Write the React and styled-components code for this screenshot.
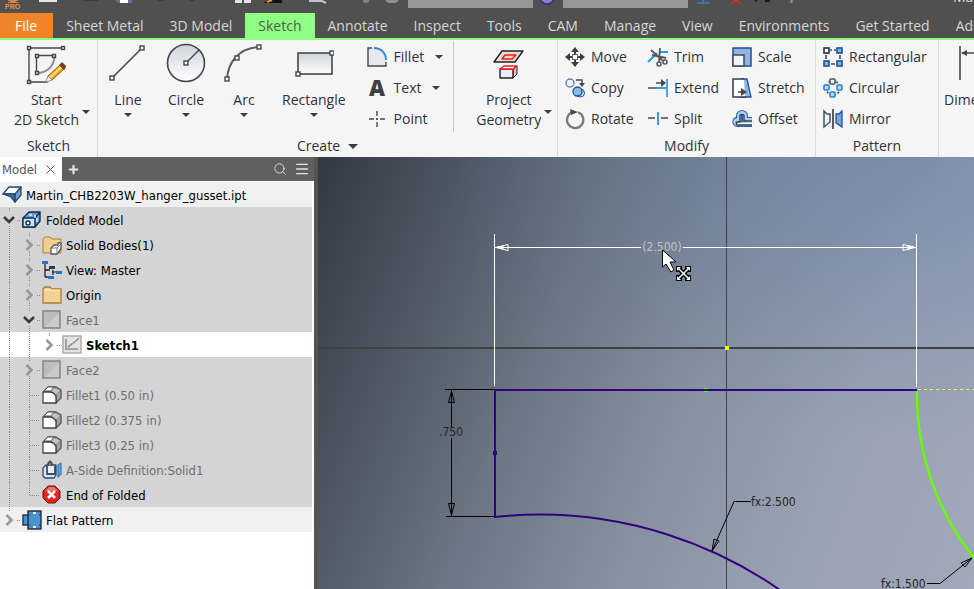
import React from "react";
import styled, { createGlobalStyle, css } from "styled-components";
import { Menu, Plus, Search, X } from "lucide-react";

const INK = "#45474c";
const BLUE = "#2d83cc";
const NAVY = "#1f4e9c";

/* ---------- big ribbon icons, 40 x 44 ---------- */

const Node = ({ x, y }) => (
  <rect x={x - 2} y={y - 2} width="4" height="4" fill="#fff" stroke={INK} strokeWidth="1.4" />
);

const StartIcon = () => (
  <svg width="40" height="44" fill="none" stroke={INK} strokeWidth="1.4">
    <path d="M3 6H37M3 6V40H22M10.500 13.500H28.500M10.500 13.500V31" />
    <path d="M28.500 13.500C28.500 24 21 31 10.500 31" stroke="#8b8d92" strokeWidth="2" />
    {[[3, 6], [37, 6], [3, 40], [11, 14], [28, 14], [11, 31]].map(([x, y]) => (
      <rect key={`${x}-${y}`} x={x - 1.5} y={y - 1.5} width="3" height="3" fill="#ddd" />
    ))}
    <path d="M20.500 39.500L22 34L34 23L38 27L26 38Z" fill="#f4a21d" stroke="#8a5a1c" strokeWidth="1" />
    <path d="M24 35.500L36 24.500" stroke="#ffdc7c" strokeWidth="2" />
    <path d="M34 23L36 21L39.500 24.500L38 27Z" fill="#7a3b1d" stroke="#7a3b1d" />
    <path d="M20 40L22 34L26 38Z" fill="#fff" stroke="#999" strokeWidth="1" />
  </svg>
);

const LineIcon = () => (
  <svg width="40" height="44">
    <path d="M4 36L34 6" stroke={INK} strokeWidth="1.6" />
    <Node x={4} y={36} />
    <Node x={34} y={6} />
  </svg>
);

const CircleIcon = () => (
  <svg width="40" height="44" stroke={INK}>
    <defs>
      <linearGradient id="disc" x2="0" y2="1">
        <stop offset="0" stopColor="#cfd4da" />
        <stop offset="1" stopColor="#fff" />
      </linearGradient>
    </defs>
    <circle cx="20" cy="21" r="18.500" fill="url(#disc)" strokeWidth="1.6" />
    <path d="M20 21L33 8" strokeWidth="1.4" />
    <Node x={20} y={21} />
  </svg>
);

const ArcIcon = () => (
  <svg width="40" height="44">
    <path d="M3 37C4 20 15 6 35 5" fill="none" stroke="#5b5e64" strokeWidth="2" />
    <Node x={3} y={37} />
    <Node x={13} y={16} />
    <Node x={35} y={5} />
  </svg>
);

const RectangleIcon = () => (
  <svg width="40" height="44">
    <rect x="4" y="11" width="34" height="21" fill="url(#disc)" stroke={INK} strokeWidth="1.6" />
    <Node x={4} y={32} />
    <Node x={38} y={11} />
  </svg>
);

const ProjectIcon = () => (
  <svg width="40" height="44" strokeLinejoin="round">
    <path d="M13 9H34L26 20H5Z" fill="#e3ddd5" stroke="#222" strokeWidth="1.4" />
    <path d="M16 13H27L23 17H13Z" fill="#f7d3cd" stroke="#ee1c1c" strokeWidth="1.5" />
    <path d="M24 27L28 24V32L24 36Z" fill="#b6c8dc" stroke="#222" />
    <path d="M11 27H24V36H11Z" fill="#e5f0fb" stroke="#222" strokeWidth="1.4" />
    <path d="M11 27L15 24H28L24 27Z" fill="#fff" stroke="#ee1c1c" strokeWidth="1.4" />
    <path d="M24 27V34" stroke="#ee1c1c" />
  </svg>
);

const DimensionIcon = () => (
  <svg width="40" height="44" stroke={INK} strokeWidth="1.6">
    <path d="M1 4V38M39 4V38M3 11H37" />
    <path d="M2 11L8 8V14ZM38 11L32 8V14Z" fill={INK} stroke="none" />
  </svg>
);

/* ---------- small ribbon icons, 20 x 20 ---------- */

const smallIcons = {
  fillet: (
    <>
      <path d="M1 1H7C14 2 18 7 19 13V19H1Z" fill="#e6e9ee" />
      <path d="M5 1H1V19H19V15" fill="none" stroke={INK} strokeWidth="1.4" />
      <path d="M7 1C14 1 19 6 19 13" fill="none" stroke={BLUE} strokeWidth="1.800" />
    </>
  ),
  text: (
    <text x="10" y="18" textAnchor="middle" fontSize="22" fontWeight="800" fill="#3d3f44">A</text>
  ),
  point: (
    <path d="M2 10H7M9 10H11M13 10H18M10 2V7M10 9V11M10 13V18" stroke={INK} strokeWidth="1.400" />
  ),
  move: (
    <g fill="#3c3e43">
      <path d="M10 0L14 5H6ZM10 20L14 15H6ZM0 10L5 6V14ZM20 10L15 6V14Z" />
      <path d="M9 4H11V7H9ZM9 13H11V16H9ZM4 9H7V11H4ZM13 9H16V11H13Z" />
      <rect x="7.500" y="7.500" width="5" height="5" fill="#fff" stroke="#666" />
    </g>
  ),
  copy: (
    <>
      <circle cx="5" cy="5" r="4" fill="#eef4fb" stroke="#667fae" strokeWidth="1.400" />
      <path d="M11 2H17V6" fill="none" stroke={INK} strokeWidth="1.400" />
      <path d="M14 5H20L17 9Z" fill={INK} />
      <circle cx="15.500" cy="15" r="4" fill="#d3e4f5" stroke={NAVY} />
      <circle cx="12.500" cy="13.500" r="4.500" fill="#91b8e3" stroke={NAVY} strokeWidth="1.300" />
    </>
  ),
  rotate: (
    <>
      <path d="M8 3A8.200 8.200 0 1 0 13 3.200" fill="none" stroke="#77797d" strokeWidth="2.200" />
      <path d="M5 0L13 3L6 6Z" fill={INK} />
    </>
  ),
  trim: (
    <g fill="none">
      <path d="M0 15L9 6M12 5H20" stroke="#259bea" strokeWidth="2" />
      <path d="M3 3L15 14M12 1L11 16M4 8L18 11" stroke="#55575c" strokeWidth="1.800" />
      <circle cx="11" cy="17" r="2" stroke="#55575c" strokeWidth="1.500" />
      <circle cx="17" cy="15" r="2" stroke="#55575c" strokeWidth="1.500" />
    </g>
  ),
  extend: (
    <>
      <path d="M0 10H9" stroke={INK} strokeWidth="1.500" />
      <path d="M9 10H19M19 1V19" stroke="#3b9be6" strokeWidth="1.800" />
      <path d="M8 5H15" stroke={INK} strokeWidth="1.500" />
      <path d="M13 1L18 5L13 9Z" fill={INK} />
    </>
  ),
  split: (
    <>
      <path d="M0 9H7M13 9H20" stroke={INK} strokeWidth="1.600" />
      <path d="M10 3V16" stroke="#3b9be6" strokeWidth="2" />
    </>
  ),
  scale: (
    <>
      <rect x="1" y="1" width="18" height="18" fill="#8db6e2" stroke="#244f91" strokeWidth="1.500" />
      <rect x="1" y="8" width="11" height="11" fill="#f4f5f7" stroke={INK} strokeWidth="1.500" />
    </>
  ),
  stretch: (
    <>
      <path d="M10 1H15L19 19H8Z" fill="#8db6e2" stroke="#244f91" strokeWidth="1.300" />
      <path d="M1 1H12L13 19H1Z" fill="#fff" />
      <path d="M12 1H1V19H14" fill="none" stroke="#313d54" strokeWidth="1.500" />
      <path d="M6 14H11" stroke={INK} strokeWidth="1.600" />
      <path d="M9 10L15 14L9 18Z" fill={INK} />
    </>
  ),
  offset: (
    <g fill="none" strokeLinejoin="round">
      <path d="M20 15H5C2 14 3 10 7 11V7C7 3 13 3 13 7V11H20" stroke="#2c62a5" strokeWidth="6" />
      <path d="M20 15H5C2 14 3 10 7 11V7C7 3 13 3 13 7V11H20" stroke="#a9cdf0" strokeWidth="4" />
      <path d="M20 16H5C4 16 4 13 5 13H8V7C8 5 12 5 12 7V12H20" stroke="#3b4250" strokeWidth="1.400" />
      <path d="M6 14.500H20" stroke="#fff" />
    </g>
  ),
  rectangular: (
    <g stroke={NAVY} strokeWidth="1.600">
      <path d="M7 3H9M11 3H13M3 8V12M17 8V12M8 17H12" stroke={INK} />
      <rect x="1" y="1" width="5" height="5" fill="#fff" stroke="#253048" />
      <rect x="14" y="1" width="5" height="5" fill="#79bdf0" />
      <rect x="1" y="14" width="5" height="5" fill="#79bdf0" />
      <rect x="14" y="14" width="5" height="5" fill="#79bdf0" />
    </g>
  ),
  circular: (
    <g stroke={BLUE} strokeWidth="1.600">
      <circle cx="10" cy="10" r="7" fill="none" stroke={INK} strokeDasharray="2 2" />
      <rect x="7" y="1" width="5" height="5" rx="1" fill="#f4f4f4" stroke="#555" />
      <rect x="1" y="7" width="5" height="5" rx="1" fill="#b9dcf6" />
      <rect x="14" y="7" width="5" height="5" rx="1" fill="#b9dcf6" />
      <rect x="7" y="14" width="5" height="5" rx="1" fill="#b9dcf6" />
    </g>
  ),
  mirror: (
    <>
      <path d="M1 2L4 5H7V13L1 18Z" fill="#f2f5fa" stroke="#42506b" strokeWidth="1.500" />
      <path d="M10 0V20" stroke="#26282c" strokeWidth="1.500" />
      <path d="M19 2L16 5H13V14L19 18Z" fill="#75a8dc" stroke={NAVY} strokeWidth="1.300" />
    </>
  ),
};

/* ---------- browser tree icons, 20 x 20 ---------- */

const filletFeature = (
  <g strokeLinejoin="round">
    <path d="M6 2H14L19 5V13L14 18V9L10 6H2Z" fill="#a5a5a5" stroke="#555" strokeWidth="1.300" />
    <path d="M6 2H12L9 6H2Z" fill="#fff" stroke="#555" />
    <path d="M12 3L9 6L14 10L18 6" fill="#c4c4c4" stroke="#888" />
    <path d="M1 7H8C11 7 14 10 14 12V18H1Z" fill="#fff" stroke="#444" strokeWidth="1.300" />
  </g>
);

const face = (
  <>
    <rect x="1" y="1" width="17" height="17" fill="#bdbdbd" stroke="#858585" strokeWidth="1.500" />
    <path d="M3 17L17 3V17Z" fill="#cbcbcb" />
  </>
);

const folderPath = "M1 4L3 2H8L10 4H19V18H1Z";

const treeIcons = {
  part: (
    <g stroke="#27496f" strokeWidth="1.300" strokeLinejoin="round">
      <path d="M7 2H19L14 9H1Z" fill="#fff" />
      <path d="M19 2V10L13 17V9Z" fill="#6ba3d4" />
      <path d="M1 9H13V17L9 12Z" fill="#3e6d9d" />
    </g>
  ),
  folded: (
    <g stroke="#12304d" strokeWidth="1.400" strokeLinejoin="round">
      <path d="M1 8L7 2H18V11L13 17H1Z" fill="#5f9ed2" />
      <path d="M1 8H13V17H1Z" fill="#c9e2f6" />
      <path d="M13 8L18 2" />
      <circle cx="6" cy="13" r="2" fill="#fff" />
      <path d="M7 5H10M13 5V8M15 12V8" stroke="#e6f3ff" />
    </g>
  ),
  bodies: (
    <>
      <path d={folderPath} fill="#f3cf8f" stroke="#a77d3a" />
      <path d="M9 13L12 10H16V8H19V14L15 19H9Z" fill="#fff" stroke="#555" strokeWidth="1.300" />
      <path d="M9 13H15V19M15 13L18 10" fill="none" stroke="#777" />
    </>
  ),
  view: (
    <>
      <path d="M3 4V17M3 10H8M3 17H7M11 10V15" fill="none" stroke="#222" strokeWidth="1.300" />
      <rect x="0" y="1" width="6" height="3" fill="#2576c4" />
      <rect x="7" y="6" width="6" height="3" fill="#2b3850" />
      <rect x="14" y="11" width="6" height="3" fill="#2576c4" />
      <rect x="6" y="16" width="6" height="3" fill="#2576c4" />
      <path d="M10 12H14" stroke="#222" />
    </>
  ),
  folder: (
    <>
      <path d={folderPath} fill="#f5d294" stroke="#a77d3a" strokeWidth="1.300" />
      <path d="M2 5H18" stroke="#fff1c8" />
    </>
  ),
  face,
  sketch: (
    <>
      <rect x="1" y="1" width="18" height="17" fill="#e2e2e2" stroke="#aaa" strokeWidth="1.400" />
      <path d="M4 4V14H16" fill="none" stroke="#a2a2a2" strokeWidth="2" />
      <path d="M6 12L17 3" stroke="#999" strokeWidth="2" />
      <path d="M9 8L16 2" stroke="#fff" />
    </>
  ),
  fillet: filletFeature,
  side: (
    <g stroke="#2c4a6b" strokeWidth="1.300" strokeLinejoin="round">
      <path d="M1 8L4 5H14V15L12 18H3L1 16Z" fill="#d3e7f7" />
      <path d="M16 5L19 3V14L16 17Z" fill="#5fa6e6" stroke="#3c7fc0" />
      <path d="M5 6V14H13V6" fill="#e8eef4" stroke="#3b4a5c" strokeWidth="1.800" />
      <path d="M6 6V3L8 1L10 3V6" fill="#777" stroke="#444" />
    </g>
  ),
  end: (
    <>
      <path d="M6 1H13L18 6V13L13 18H6L1 13V6Z" fill="#e2231f" stroke="#6f1212" />
      <path d="M3 6L7 2H12L16 6" fill="#f2726a" />
      <path d="M6 6L13 13M13 6L6 13" stroke="#fff" strokeWidth="2.600" />
    </>
  ),
  flat: (
    <>
      <rect x="1" y="5" width="8" height="10" fill="#4d92cf" stroke="#1b2f48" strokeWidth="1.400" />
      <rect x="6" y="1" width="13" height="18" fill="#4d92cf" stroke="#1b2f48" strokeWidth="1.400" />
      <path d="M6 5H8M17 5H19M6 15H8M17 15H19" stroke="#1b2f48" />
      <path d="M11 3H14M11 17H14" stroke="#dceeff" strokeWidth="2" />
    </>
  ),
};

/* ---------- data ---------- */

const tabs = [
  "File", "Sheet Metal", "3D Model", "Sketch", "Annotate", "Inspect", "Tools",
  "CAM", "Manage", "View", "Environments", "Get Started", "Add-Ins",
];

const modifyTools = [
  ["move", "Move"], ["trim", "Trim"], ["scale", "Scale"],
  ["copy", "Copy"], ["extend", "Extend"], ["stretch", "Stretch"],
  ["rotate", "Rotate"], ["split", "Split"], ["offset", "Offset"],
];

// guides: how many parent lines run through the row
// branch: "open" | "closed" | "leaf" | "last"
const nodes = [
  { icon: "part", label: "Martin_CHB2203W_hanger_gusset.ipt", tone: "light" },
  { icon: "folded", label: "Folded Model", branch: "open", guides: 0, below: true },
  { icon: "bodies", label: "Solid Bodies(1)", branch: "closed", guides: 1, below: true },
  { icon: "view", label: "View: Master", branch: "closed", guides: 1, below: true },
  { icon: "folder", label: "Origin", branch: "closed", guides: 1, below: true },
  { icon: "face", label: "Face1", branch: "open", guides: 1, below: true, dim: true },
  { icon: "sketch", label: "Sketch1", branch: "closed", guides: 2, tone: "active" },
  { icon: "face", label: "Face2", branch: "closed", guides: 1, below: true, dim: true },
  { icon: "fillet", label: "Fillet1 (0.50 in)", branch: "leaf", guides: 1, dim: true },
  { icon: "fillet", label: "Fillet2 (0.375 in)", branch: "leaf", guides: 1, dim: true },
  { icon: "fillet", label: "Fillet3 (0.25 in)", branch: "leaf", guides: 1, dim: true },
  { icon: "side", label: "A-Side Definition:Solid1", branch: "leaf", guides: 1, dim: true },
  { icon: "end", label: "End of Folded", branch: "last", guides: 1 },
  { icon: "flat", label: "Flat Pattern", branch: "closed", guides: 0, tone: "light" },
];

/* ---------- pieces ---------- */

function Tool({ icon, label, menu }) {
  return (
    <ToolButton>
      <ToolIcon width="20" height="20">{smallIcons[icon]}</ToolIcon>
      <span>{label}</span>
      {menu && <Caret />}
    </ToolButton>
  );
}

function BigTool({ icon, label, menu }) {
  return (
    <BigButton>
      {icon}
      <span>{label}</span>
      {menu && <Caret />}
    </BigButton>
  );
}

function TallTool({ icon, lines }) {
  return (
    <TallButton>
      <TallStack>
        {icon}
        {lines.map((line) => (
          <span key={line}>{line}</span>
        ))}
      </TallStack>
      <Caret />
    </TallButton>
  );
}

function Branch({ branch, below }) {
  const leaf = branch === "leaf" || branch === "last";
  return (
    <svg width="20" height="25" fill="none" stroke="#8a8a8a" strokeDasharray="1 1">
      {leaf ? (
        <path d={`M9.500 0V${branch === "last" ? 13 : 25}M10 13.500H20`} />
      ) : (
        <path d={`M9.500 1V5${below ? "M9.500 19V25" : ""}M17 13.500H20`} />
      )}
      {branch === "open" && (
        <path d="M4 10L9 15L14 10" stroke="#3a3a3a" strokeWidth="2.600" strokeDasharray="none" />
      )}
      {branch === "closed" && (
        <path d="M6.500 8L11.500 13L6.500 18" stroke="#979797" strokeWidth="2.600" strokeDasharray="none" />
      )}
    </svg>
  );
}

function TreeNode({ node }) {
  return (
    <TreeRow $tone={node.tone} $dim={node.dim}>
      {Array.from({ length: node.guides || 0 }, (_, i) => (
        <svg key={i} width="20" height="25">
          <path d="M9.500 0V25" stroke="#8a8a8a" strokeDasharray="1 1" />
        </svg>
      ))}
      {node.branch && <Branch branch={node.branch} below={node.below} />}
      <TreeIcon width="20" height="20">{treeIcons[node.icon]}</TreeIcon>
      <TreeLabel>{node.label}</TreeLabel>
    </TreeRow>
  );
}

function Drawing() {
  return (
    <DrawingSvg>
      {/* origin axes */}
      <g stroke="#41413f" shapeRendering="crispEdges">
        <path d="M408.500 0V3000" />
        <path d="M0 191H3000" strokeWidth="2" />
      </g>
      {/* profile */}
      <g fill="none" strokeWidth="2">
        <path d="M599 233H177V360A420 420 0 0 1 500 463" stroke="#32007f" />
        <path d="M599 234V238A262 262 0 0 0 656 401L680 427" stroke="#66ff00" strokeWidth="2.400" />
      </g>
      <path d="M600 232.500H3000" stroke="#ffff30" strokeDasharray="3 3" />
      <rect x="175" y="294" width="4" height="4" fill="#32007f" />
      <path d="M386 231.500H390M386 234.500H390" stroke="#66ff00" />
      <rect x="407" y="189" width="4" height="4" fill="#ffff00" />
      {/* overall width */}
      <g stroke="#fff" fill="none">
        <path d="M176.500 77V229M598.500 77V230M177 90.500H323M365 90.500H598" />
        <path d="M178 90.500L190 87.500V93.500ZM597 90.500L585 87.500V93.500Z" />
        <path d="M179 90L185 89V92ZM596 90L590 89V92Z" fill="#fff" />
      </g>
      {/* height and radii */}
      <g stroke="#000" fill="none">
        <path d="M127 232.500H176M128 359.500H176M133.500 233V270M133.500 281V359" />
        <path d="M133.500 234L130.500 245.500H136.500ZM133.500 358L130.500 346.500H136.500Z" />
        <path d="M433 344.500H416L394 394M609 426.500H622L654 401" />
        <path d="M394 394L396 382L401 384ZM654 401L647 410L643 406Z" />
      </g>
      <DimText x="344" y="94" $light textAnchor="middle">(2.500)</DimText>
      <DimText x="133" y="279" textAnchor="middle">.750</DimText>
      <DimText x="433" y="349">fx:2.500</DimText>
      <DimText x="563" y="431">fx:1.500</DimText>
      {/* pointer with the drag badge */}
      <path
        d="M344.500 93V110L348 107L353 115L356 113L352 105H358Z"
        fill="#fff"
        stroke="#000"
      />
      <g transform="translate(358 109)">
        <path d="M0 0H6V3L7.500 4.500L9 3V0H15V6H12L10.500 7.500L12 9H15V15H9V12L7.500 10.500L6 12V15H0V9H3L4.500 7.500L3 6H0Z" fill="#000" />
        <path d="M1 1H5L1 5ZM14 1V5L10 1ZM1 14V10L5 14ZM14 14H10L14 10Z" fill="#fff" />
        <path d="M2 2L13 13M13 2L2 13" stroke="#fff" strokeWidth="1.500" />
      </g>
    </DrawingSvg>
  );
}

function App() {
  return (
    <Window>
      <GlobalStyle />
      <QuickBar>
        <svg width="408" height="13">
          <path d="M8 0H18V1H16V2H18V3H8V2H10V1H8Z" fill="#d9843f" />
          <ProText x="5" y="9">PRO</ProText>
          <rect x="39" y="0" width="18" height="2" fill="#e8e8e8" />
          <path d="M83 .500H98M158 .500H163M190 .500H194" stroke="#3d3d3d" />
          <path d="M115 0H132V3H118Z" fill="#5f6f93" />
          <rect x="120" y="0" width="8" height="3" fill="#fff" />
          <path d="M235 0H242V3H235ZM244 0H251V3H244Z" fill="#e4e4e4" />
          <path d="M264 3L268 0H282V3Z" fill="#111" />
          <path d="M267 2L272 0" stroke="#ec9a32" strokeWidth="2" />
          <path d="M309 1H322L326 3" stroke="#bfc4cc" strokeWidth="2" fill="none" />
          <circle cx="366" cy="0" r="3" fill="#858585" />
          <path d="M385 0H399L396 3H388Z" fill="#8d8d8d" />
        </svg>
        <SearchBox aria-label="Material" />
        <svg width="30" height="13">
          <circle cx="14" cy="-3" r="7" fill="#9a73d8" stroke="#34305e" strokeWidth="1.500" />
        </svg>
        <SearchBox aria-label="Appearance" />
        <svg width="265" height="13">
          <path d="M9 3H22M15 0V4" stroke="#2b7fd6" strokeWidth="1.500" />
          <path d="M44 3L48 0M52 3L48 0" stroke="#e3261f" strokeWidth="2" />
          <path d="M66 0H70L68 2ZM77 0H82V2H77Z" fill="#1d1418" />
          <path d="M103.500 0V3" stroke="#999" strokeWidth="2" />
        </svg>
        <Title>Ma</Title>
      </QuickBar>
      <TabBar role="tablist">
        {tabs.map((tab) => (
          <Tab
            key={tab}
            role="tab"
            aria-selected={tab === "Sketch"}
            $file={tab === "File"}
            $active={tab === "Sketch"}
          >
            {tab}
          </Tab>
        ))}
      </TabBar>
      <Ribbon>
        <Panel $width={98}>
          <PanelBody $pad={14}>
            <TallTool icon={<StartIcon />} lines={["Start", "2D Sketch"]} />
          </PanelBody>
          <PanelTitle>Sketch</PanelTitle>
        </Panel>
        <Panel $width={460}>
          <PanelBody $pad={10} $gap={18}>
            <BigTool icon={<LineIcon />} label="Line" menu />
            <BigTool icon={<CircleIcon />} label="Circle" menu />
            <BigTool icon={<ArcIcon />} label="Arc" menu />
            <BigTool icon={<RectangleIcon />} label="Rectangle" menu />
            <ToolColumn $wide>
              <Tool icon="fillet" label="Fillet" menu />
              <Tool icon="text" label="Text" menu />
              <Tool icon="point" label="Point" />
            </ToolColumn>
            <Divider />
            <TallTool icon={<ProjectIcon />} lines={["Project", "Geometry"]} />
          </PanelBody>
          <PanelTitle>
            Create <Caret $large />
          </PanelTitle>
        </Panel>
        <Panel $width={258}>
          <ToolGrid>
            {modifyTools.map(([icon, label]) => (
              <Tool key={icon} icon={icon} label={label} />
            ))}
          </ToolGrid>
          <PanelTitle>Modify</PanelTitle>
        </Panel>
        <Panel $width={123}>
          <PanelBody $pad={7}>
            <ToolColumn>
              <Tool icon="rectangular" label="Rectangular" />
              <Tool icon="circular" label="Circular" />
              <Tool icon="mirror" label="Mirror" />
            </ToolColumn>
          </PanelBody>
          <PanelTitle>Pattern</PanelTitle>
        </Panel>
        <Panel $width={98}>
          <PanelBody $pad={5}>
            <BigTool icon={<DimensionIcon />} label="Dimension" />
          </PanelBody>
        </Panel>
      </Ribbon>
      <Workspace>
        <Browser>
          <BrowserHeader>
            <BrowserTab>
              Model <X size={15} strokeWidth={1.5} color="#444" />
            </BrowserTab>
            <HeaderButton aria-label="Add panel">
              <Plus size={13} strokeWidth={4} />
            </HeaderButton>
            <Spacer />
            <HeaderButton aria-label="Search">
              <Search size={14} strokeWidth={1.5} />
            </HeaderButton>
            <HeaderButton aria-label="Menu">
              <Menu size={16} strokeWidth={2} />
            </HeaderButton>
          </BrowserHeader>
          <Tree>
            {nodes.map((node) => (
              <TreeNode key={node.label} node={node} />
            ))}
          </Tree>
        </Browser>
        <Viewport>
          <Drawing />
        </Viewport>
      </Workspace>
    </Window>
  );
}

/* ---------- styles ---------- */

const GlobalStyle = createGlobalStyle`
  * {
    box-sizing: border-box;
  }
  body {
    margin: 0;
    overflow: hidden;
    font-family: "Open Sans", "Noto Sans", sans-serif;
    font-size: 14px;
    color: #303236;
  }
  button {
    border: none;
    padding: 0;
    background: none;
    font: inherit;
    color: inherit;
    cursor: pointer;
  }
  svg {
    display: block;
    flex: none;
  }
`;

const Window = styled.div`
  display: flex;
  flex-direction: column;
  height: 100vh;
  overflow: hidden;
`;

const QuickBar = styled.div`
  display: flex;
  align-items: flex-start;
  height: 13px;
  background-color: #505050;
`;

const ProText = styled.text`
  font-family: "Liberation Sans", sans-serif;
  font-size: 7px;
  font-weight: bold;
  fill: #e8924a;
`;

const SearchBox = styled.input`
  width: 125px;
  height: 8px;
  padding: 0;
  border: none;
  background-color: #969696;
`;

const Title = styled.div`
  display: flex;
  align-items: flex-end;
  height: 3px;
  overflow: hidden;
  line-height: 12px;
  color: #ddd;
`;

const TabBar = styled.div`
  display: flex;
  flex: none;
  height: 25px;
  overflow: hidden;
  background-color: #505050;
`;

const Tab = styled.button`
  flex: none;
  padding: 0 13px;
  line-height: 25px;
  white-space: nowrap;
  color: #d6d6d6;

  ${({ $file }) =>
    $file &&
    css`
      padding: 0 16px 0 15px;
      background-color: #f08428;
      color: white;
    `}
  ${({ $active }) =>
    $active &&
    css`
      background-color: #90ff84;
      color: #47604a;
    `}
`;

const Ribbon = styled.div`
  display: flex;
  flex: none;
  height: 119px;
  overflow: hidden;
  border-top: 2px solid #90ff84;
  background-color: #f5f5f5;
`;

const Panel = styled.section`
  display: flex;
  flex-direction: column;
  flex: none;
  width: ${({ $width }) => $width}px;
  border-right: 1px solid #dadada;
`;

const PanelBody = styled.div`
  display: flex;
  flex: 1;
  gap: ${({ $gap }) => $gap || 0}px;
  padding-top: 1px;
  padding-left: ${({ $pad }) => $pad}px;
`;

const PanelTitle = styled.div`
  display: flex;
  justify-content: center;
  align-items: center;
  gap: 8px;
  height: 22px;
  line-height: 22px;
`;

const Caret = styled.span`
  flex: none;
  width: 0;
  border-left: ${({ $large }) => ($large ? 5 : 4)}px solid transparent;
  border-right: ${({ $large }) => ($large ? 5 : 4)}px solid transparent;
  border-top: ${({ $large }) => ($large ? 5 : 4)}px solid #3a3c40;
`;

const BigButton = styled.button`
  display: flex;
  flex-direction: column;
  align-items: center;
  align-self: flex-start;
  padding-top: 1px;
  line-height: 20px;

  span:nth-of-type(1) {
    margin-top: 4px;
  }
  ${Caret} {
    margin-top: 3px;
  }
`;

const TallStack = styled.span`
  display: flex;
  flex-direction: column;
  align-items: center;
  line-height: 20px;

  svg {
    margin-bottom: 4px;
  }
`;

const TallButton = styled.button`
  display: flex;
  align-items: flex-start;
  align-self: flex-start;
  gap: 3px;
  padding-top: 1px;

  ${Caret} {
    margin-top: 68px;
  }
`;

const ToolIcon = styled.svg`
  overflow: visible;
`;

const ToolButton = styled.button`
  display: flex;
  align-items: center;
  gap: 6px;
  height: 31px;

  ${Caret} {
    margin-left: 4px;
  }
`;

const ToolColumn = styled.div`
  display: flex;
  flex-direction: column;
  margin-left: ${({ $wide }) => ($wide ? 3 : 0)}px;

  ${ToolButton} {
    gap: ${({ $wide }) => ($wide ? 7 : 6)}px;
  }
`;

const ToolGrid = styled.div`
  display: grid;
  grid-template-columns: 83px 84px 1fr;
  align-content: start;
  flex: 1;
  padding-top: 1px;
  padding-left: 7px;
`;

const Divider = styled.div`
  width: 1px;
  height: 91px;
  margin: 0 4px 0 -8px;
  background-color: #c8c8c8;
`;

const Workspace = styled.div`
  display: flex;
  flex: 1;
  min-height: 0;
`;

const Browser = styled.aside`
  flex: none;
  width: 318px;
  border-right: 4px solid #545454;
  background-color: white;
  font-family: "DejaVu Sans Condensed", "DejaVu Sans", sans-serif;
  font-size: 13px;
`;

const BrowserHeader = styled.div`
  display: flex;
  align-items: center;
  height: 24px;
  padding-right: 1px;
  background-color: #606060;
`;

const BrowserTab = styled.div`
  display: flex;
  align-items: center;
  gap: 6px;
  height: 24px;
  padding: 0 4px 0 2px;
  background-color: white;
  color: #555;
`;

const HeaderButton = styled.button`
  display: flex;
  align-items: center;
  justify-content: center;
  width: 22px;
  color: #e4e4e4;
`;

const Spacer = styled.div`
  flex: 1;
`;

const Tree = styled.ul`
  margin: 1px 2px 0 0;
  padding: 0;
  list-style: none;
`;

const rowTones = {
  light: "#f0f0f0",
  active: "#ffffff",
};

const TreeRow = styled.li`
  display: flex;
  align-items: center;
  height: 25px;
  white-space: nowrap;
  background-color: ${({ $tone }) => rowTones[$tone] || "#d4d4d4"};
  color: ${({ $dim }) => ($dim ? "#6e6e6e" : "#000")};
  font-weight: ${({ $tone }) => ($tone === "active" ? "bold" : "normal")};
`;

const TreeIcon = styled.svg`
  margin: 0 4px 0 2px;
`;

const TreeLabel = styled.span`
  padding-top: 2px;
  line-height: 16px;
`;

const Viewport = styled.main`
  flex: 1;
  min-width: 0;
  overflow: hidden;
  background: radial-gradient(
      ellipse 75% 65% at 90% 0%,
      rgba(85, 115, 165, 0.4),
      rgba(85, 115, 165, 0)
    ),
    linear-gradient(
      112deg,
      #323943 0%,
      #4c5561 17%,
      #6c7684 36%,
      #8690a0 56%,
      #98a1b2 76%,
      #a1a8ba 100%
    );
`;

const DrawingSvg = styled.svg`
  width: 100%;
  height: 100%;
`;

const DimText = styled.text`
  font-family: "DejaVu Sans Condensed", "DejaVu Sans", sans-serif;
  font-size: 12px;
  fill: ${({ $light }) => ($light ? "#c4c4be" : "#25252b")};
`;

export default App;
